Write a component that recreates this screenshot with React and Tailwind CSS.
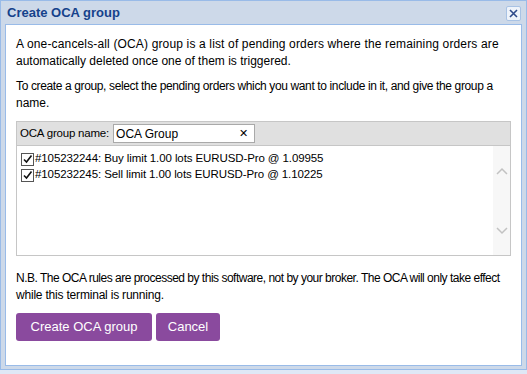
import { useState } from 'react'

const orders = [
  { id: '105232244', text: 'Buy limit 1.00 lots EURUSD-Pro @ 1.09955' },
  { id: '105232245', text: 'Sell limit 1.00 lots EURUSD-Pro @ 1.10225' },
]

function Chevron({ up }) {
  return (
    <svg width="12" height="8" viewBox="0 0 12 8" className="text-[#c2c2c2]">
      <path d={up ? 'M1 7 L6 2 L11 7' : 'M1 1 L6 6 L11 1'} fill="none" stroke="currentColor" strokeWidth="1.5" />
    </svg>
  )
}

export default function App() {
  const [name, setName] = useState('OCA Group')
  const [checked, setChecked] = useState({ '105232244': true, '105232245': true })

  return (
    <div className="w-[527px] h-[374px] bg-[#dfe8f6] font-['Liberation_Sans',sans-serif] text-[12px] text-black overflow-hidden">
      <div className="h-[370px] bg-[#cdd9e9] border border-[#99bbe8] flex flex-col">
        {/* Title bar */}
        <div className="h-[23px] flex items-center justify-between pl-[6px] pr-[5px]">
          <span className="font-bold text-[13px] text-[#15428b]">Create OCA group</span>
          <button className="w-[15px] h-[15px] mt-[2px] flex items-center justify-center rounded-[2px] border border-[#a8c2e4] bg-[#eef3fa]">
            <svg width="9" height="9" viewBox="0 0 9 9">
              <path d="M1 1 L8 8 M8 1 L1 8" stroke="#2e4a8a" strokeWidth="1.6" />
            </svg>
          </button>
        </div>

        {/* Body */}
        <div className="flex-1 mx-[4px] mb-[3px] bg-white border border-[#99bbe8] px-[10px] pt-[11px]">
          <p className="leading-[17px] whitespace-nowrap">
            <span className="tracking-[0.15px]">A one-cancels-all (OCA) group is a list of pending orders where the remaining orders are</span>
            <br />
            automatically deleted once one of them is triggered.
          </p>
          <p className="leading-[17px] mt-[8px] whitespace-nowrap">
            <span className="tracking-[-0.37px]">To create a group, select the pending orders which you want to include in it, and give the group a</span>
            <br />
            name.
          </p>

          <div className="mt-[9px] border border-[#c6c6c6]">
            <div className="h-[24px] bg-[#e0e0e0] border-b border-[#c6c6c6] flex items-center pl-[3px] gap-[4px]">
              <span className="text-[11.5px] tracking-[-0.2px]">OCA group name:</span>
              <div className="w-[142px] h-[19px] bg-white border border-[#a9a9a9] flex items-center justify-between pl-[2px] pr-[6px]">
                <input
                  value={name}
                  onChange={e => setName(e.target.value)}
                  className="w-[110px] outline-none text-[12px]"
                />
                <span className="text-[11px] leading-none">✕</span>
              </div>
            </div>
            <div className="h-[109px] flex">
              <div className="flex-1 pt-[5px] pl-[4px] text-[11.5px] tracking-[-0.1px]">
                {orders.map(o => (
                  <label key={o.id} className="flex items-center h-[16px] gap-[1px]">
                    <span
                      onClick={() => setChecked(c => ({ ...c, [o.id]: !c[o.id] }))}
                      className="w-[13px] h-[13px] border border-[#555] bg-white flex items-center justify-center"
                    >
                      {checked[o.id] && (
                        <svg width="11" height="11" viewBox="0 0 11 11">
                          <path d="M2 5.5 L4.5 8 L9.5 1.5" fill="none" stroke="#111" strokeWidth="1.6" />
                        </svg>
                      )}
                    </span>
                    <span>#{o.id}: {o.text}</span>
                  </label>
                ))}
              </div>
              <div className="w-[17px] bg-[#f7f7f7] flex flex-col items-center justify-between pt-[21px] pb-[20px]">
                <Chevron up />
                <Chevron />
              </div>
            </div>
          </div>

          <p className="leading-[17px] mt-[14px] whitespace-nowrap">
            <span className="tracking-[-0.5px]">N.B. The OCA rules are processed by this software, not by your broker. The OCA will only take effect</span>
            <br />
            <span className="tracking-[-0.2px]">while this terminal is running.</span>
          </p>

          <div className="flex gap-[4px] mt-[9px]">
            <button className="h-[28px] w-[136px] rounded-[3px] bg-[#8a4a9e] text-white text-[13px]">Create OCA group</button>
            <button className="h-[28px] w-[64px] rounded-[3px] bg-[#8a4a9e] text-white text-[13px]">Cancel</button>
          </div>
        </div>
      </div>
    </div>
  )
}
